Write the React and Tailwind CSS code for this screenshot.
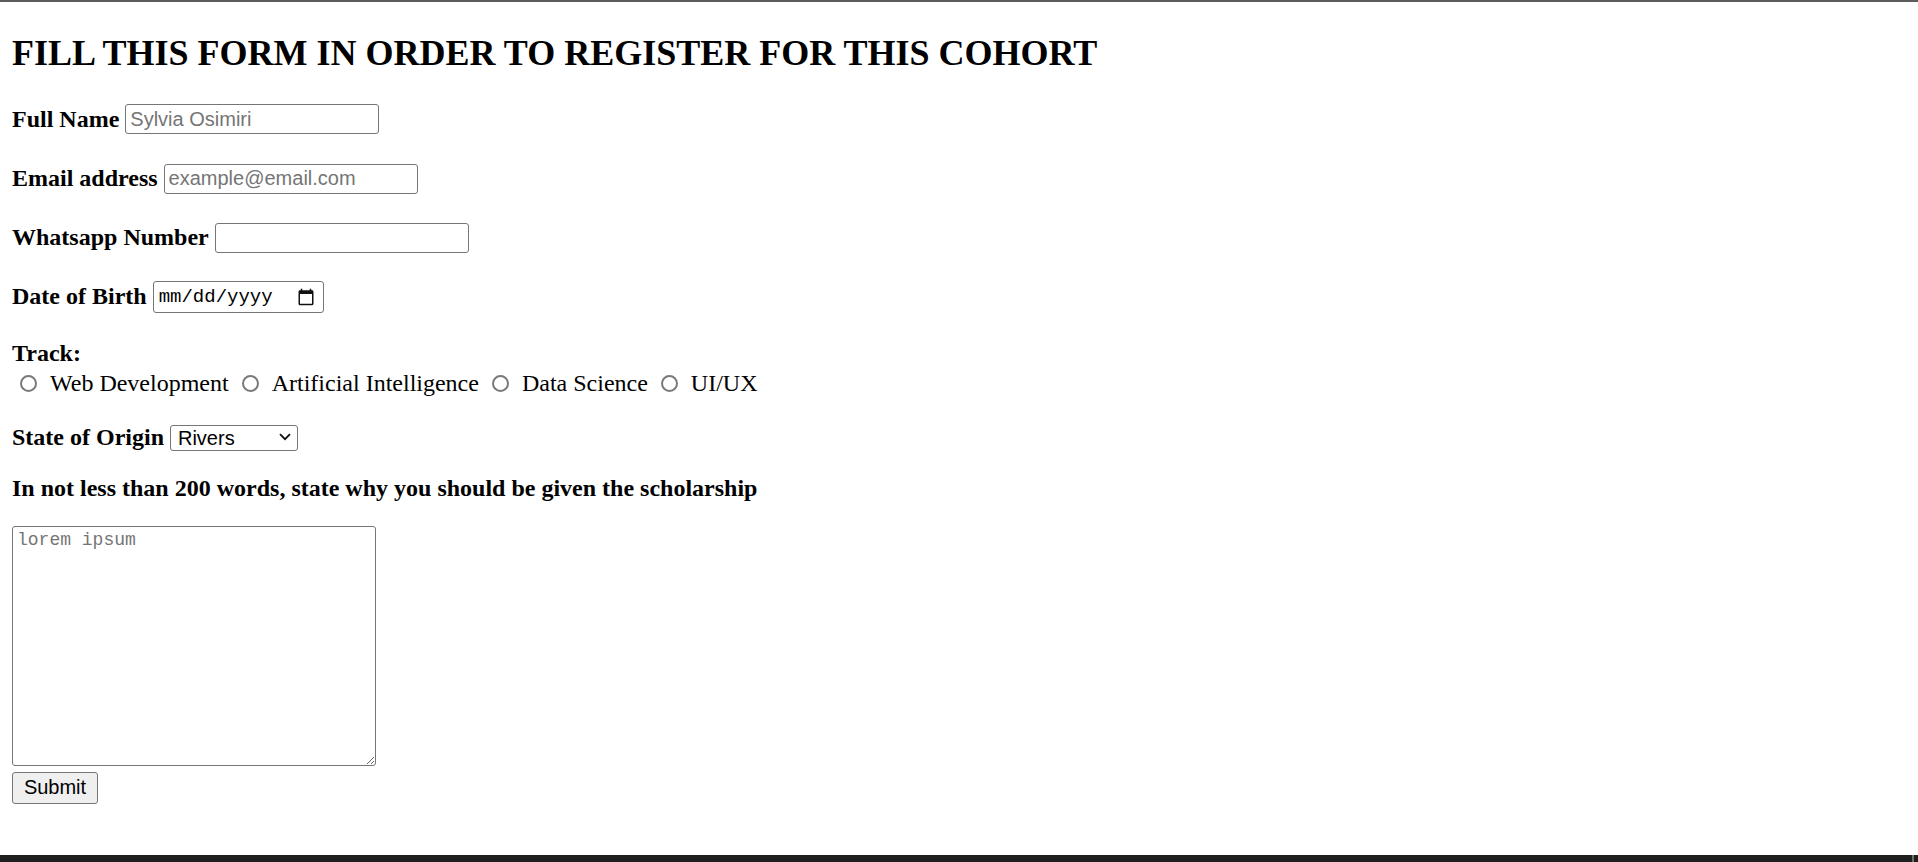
import React from 'react';

const tracks = ['Web Development', 'Artificial Intelligence', 'Data Science', 'UI/UX'];

// Text field with the browser's default look
function Field({ label, placeholder = '', type = 'text', width = 'w-[254px]' }) {
  return (
    <div className="flex items-center gap-[6px] h-[30px]">
      <label className="font-bold whitespace-nowrap">{label}</label>
      <input
        type={type}
        placeholder={placeholder}
        className={`${width} h-[30px] px-[4px] border border-[#767676] rounded-[3px] bg-white text-[20px] text-black font-['Liberation_Sans',Arial,sans-serif] placeholder:text-[#757575] outline-none`}
      />
    </div>
  );
}

function CalendarIcon() {
  return (
    <svg viewBox="0 0 24 24" className="w-[18px] h-[18px]" fill="#111">
      <path d="M20 3h-1V1h-2v2H7V1H5v2H4c-1.1 0-2 .9-2 2v16c0 1.1.9 2 2 2h16c1.1 0 2-.9 2-2V5c0-1.1-.9-2-2-2zm0 18H4V8h16v13z" />
    </svg>
  );
}

export default function App() {
  return (
    <div className="min-h-[862px] flex flex-col bg-white text-black leading-[normal] font-['Liberation_Serif','Times_New_Roman',serif]">
      <div className="h-[2px] bg-[#5c5c5c]" />

      <main className="flex-1 px-[12px]">
        <h2 className="mt-[30px] mb-[30px] text-[36px] font-bold whitespace-nowrap">
          FILL THIS FORM IN ORDER TO REGISTER FOR THIS COHORT
        </h2>

        <form className="flex flex-col items-start text-[24px]" onSubmit={(e) => e.preventDefault()}>
          <Field label="Full Name" placeholder="Sylvia Osimiri" />
          <div className="mt-[29.5px]">
            <Field label="Email address" type="email" placeholder="example@email.com" />
          </div>
          <div className="mt-[29px]">
            <Field label="Whatsapp Number" type="tel" />
          </div>

          {/* date of birth */}
          <div className="mt-[28px] flex items-center gap-[6px] h-[32px]">
            <label className="font-bold whitespace-nowrap">Date of Birth</label>
            <div className="w-[171px] h-[32px] flex items-center justify-between pl-[5px] pr-[8px] border border-[#767676] rounded-[3px]">
              <span className="text-[19px] font-['Liberation_Mono','DejaVu_Sans_Mono',monospace]">mm/dd/yyyy</span>
              <CalendarIcon />
            </div>
          </div>

          <div className="mt-[27px] h-[28px] font-bold">Track:</div>
          <div className="mt-[1.5px] h-[28px] flex items-center gap-[5px] whitespace-nowrap">
            {tracks.map((t) => (
              <label key={t} className="flex items-center">
                <span className="shrink-0 w-[17px] h-[17px] ml-[8px] mr-[13px] rounded-full border-2 border-[#7a7a7a] bg-white" />
                {t}
              </label>
            ))}
          </div>

          {/* state select */}
          <div className="mt-[27px] flex items-center gap-[6px] h-[26px]">
            <label className="font-bold whitespace-nowrap">State of Origin</label>
            <div className="relative">
              <select
                defaultValue="Rivers"
                className="appearance-none w-[128px] h-[26px] pl-[7px] border border-[#767676] rounded-[3px] bg-white text-[20px] font-['Liberation_Sans',Arial,sans-serif] outline-none"
              >
                <option>Rivers</option>
                <option>Lagos</option>
                <option>Abuja</option>
                <option>Enugu</option>
              </select>
              <svg
                viewBox="0 0 12 8"
                className="absolute right-[7px] top-[9px] w-[12px] h-[8px] pointer-events-none"
                fill="none"
                stroke="#111"
                strokeWidth="1.8"
              >
                <path d="M1 1.2 6 6.2 11 1.2" />
              </svg>
            </div>
          </div>

          <p className="mt-[25px] h-[28px] font-bold whitespace-nowrap">
            In not less than 200 words, state why you should be given the scholarship
          </p>

          <textarea
            placeholder="lorem ipsum"
            className="mt-[22.5px] w-[364px] h-[240px] pl-[4px] pt-[3px] border border-[#767676] rounded-[3px] resize text-[18px] font-['Liberation_Mono','DejaVu_Sans_Mono',monospace] placeholder:text-[#757575] outline-none"
          />

          <button
            type="submit"
            className="mt-[6px] w-[86px] h-[32px] bg-[#efefef] border border-[#767676] rounded-[3px] text-[20px] font-['Liberation_Sans',Arial,sans-serif]"
          >
            Submit
          </button>
        </form>
      </main>

      <div className="h-[7px] bg-[#1f1f1f] flex justify-end">
        <span className="w-[2px] mr-[4px] bg-[#6e6e6e]" />
      </div>
    </div>
  );
}
